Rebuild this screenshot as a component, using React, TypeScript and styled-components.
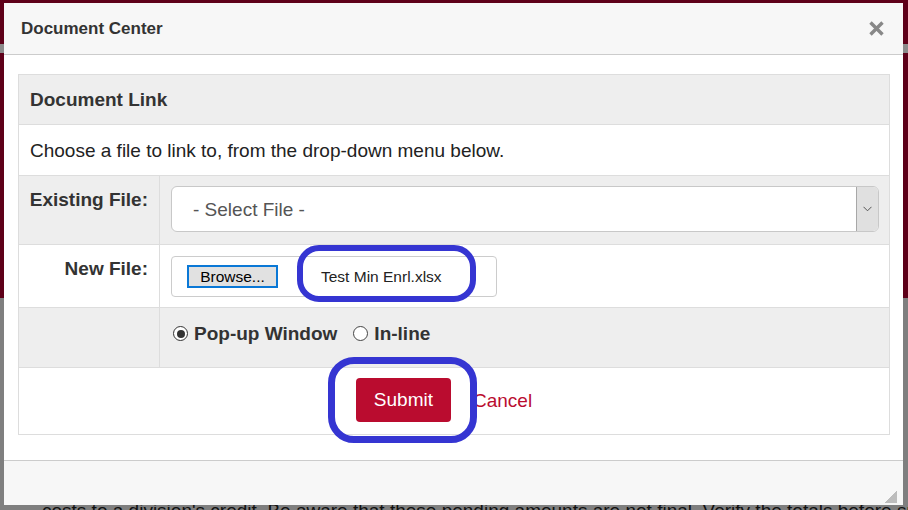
import React from "react";
import styled, { createGlobalStyle } from "styled-components";

const GlobalStyle = createGlobalStyle`
  html, body {
    margin: 0;
    padding: 0;
  }
  body {
    font-family: "Liberation Sans", Arial, sans-serif;
    background: #7f7f7f;
    overflow: hidden;
  }
`;

// page behind the dialog (darkened by the overlay)
const Backdrop = styled.div`
    position: relative;
    width: 908px;
    height: 510px;
    overflow: hidden;
    display: flex;
    flex-direction: column;
    background: #7f7f7f;
`;
const SiteHeader = styled.div`
    flex-shrink: 0;
    height: 44px;
    background: #5e0019;
`;
const SiteNav = styled.div`
    flex-shrink: 0;
    height: 9px;
    background: #8b8b8b;
`;
const SiteBanner = styled.div`
    flex-shrink: 0;
    height: 245px;
    background: #5e0019;
`;
const SiteContent = styled.div`
    flex-shrink: 0;
    padding: 199px 0 0 42px;
    font-size: 19px;
    line-height: 27px;
    color: #111;
    white-space: nowrap;
`;

const Modal = styled.div`
    position: absolute;
    left: 4px;
    top: 3px;
    width: 899px;
    height: 502px;
    background: #fff;
    display: flex;
    flex-direction: column;
`;
const ModalHeader = styled.div`
    height: 52px;
    box-sizing: border-box;
    background: #f7f7f7;
    border-bottom: 1px solid #ccc;
    display: flex;
    align-items: center;
    justify-content: space-between;
    padding: 0 19px 0 17px;
`;
const ModalTitle = styled.h4`
    margin: 0;
    font-size: 17px;
    font-weight: 700;
    color: #333;
`;
const CloseButton = styled.button`
    border: 0;
    background: none;
    padding: 0;
    width: 15px;
    height: 15px;
    display: flex;
    cursor: pointer;
`;
const ModalBody = styled.div`
    flex: 1;
    padding: 19px 13px 0 14px;
`;
const ModalFooter = styled.div`
    position: relative;
    height: 45px;
    box-sizing: border-box;
    border-top: 1px solid #ccc;
    background: #f7f7f7;
`;
const ResizeGrip = styled.div`
    position: absolute;
    right: 6px;
    bottom: 2px;
    width: 13px;
    height: 13px;
    background: linear-gradient(to bottom right, transparent 50%, #bdbdbd 50%);
`;

const FormTable = styled.div`
    border: 1px solid #ddd;
    font-size: 19px;
    line-height: 27px;
    color: #333;
`;
const Row = styled.div<{ $shade?: boolean }>`
    display: flex;
    background: ${(p) => (p.$shade ? "#eee" : "#fff")};
    & + & {
        border-top: 1px solid #ddd;
    }
`;
const HeadCell = styled.div`
    flex: 1;
    padding: 11px 11px;
    font-weight: 700;
`;
const TextCell = styled.div`
    flex: 1;
    padding: 12px 11px 11px;
    color: #222;
`;
const LabelCell = styled.div`
    width: 141px;
    flex-shrink: 0;
    box-sizing: border-box;
    border-right: 1px solid #ddd;
    text-align: right;
    font-weight: 700;
    padding: 10px 11px 0 0;
`;
const ValueCell = styled.div<{ $pad: string }>`
    flex: 1;
    padding: ${(p) => p.$pad};
`;
const ActionCell = styled.div`
    flex: 1;
    display: flex;
    justify-content: center;
    align-items: center;
    padding: 10px 0 12px;
`;

const SelectBox = styled.div`
    height: 46px;
    box-sizing: border-box;
    border: 1px solid #c8c8c8;
    border-radius: 6px;
    background: #fff;
    display: flex;
    align-items: center;
    justify-content: space-between;
    overflow: hidden;
`;
const SelectText = styled.span`
    padding-left: 21px;
    color: #555;
`;
const SelectArrow = styled.span`
    width: 21px;
    align-self: stretch;
    background: #e0e0e0;
    border-left: 1px solid #a8a8a8;
    display: flex;
    align-items: center;
    justify-content: center;
`;

const FileBox = styled.div`
    position: relative;
    width: 326px;
    height: 41px;
    box-sizing: border-box;
    border: 1px solid #ccc;
    border-radius: 4px;
    background: #fff;
    display: flex;
    align-items: center;
    padding-left: 15px;
    font-size: 15.5px;
`;
const BrowseButton = styled.button`
    height: 23px;
    width: 91px;
    box-sizing: border-box;
    border: 2px solid #0a78d6;
    background: #e1e1e1;
    font-family: inherit;
    font-size: 15.5px;
    line-height: 19px;
    color: #000;
    padding: 0;
`;
const FileName = styled.span`
    margin-left: 43px;
    color: #222;
`;

const RadioGroup = styled.div`
    display: flex;
    align-items: center;
    font-weight: 700;
    padding-left: 2px;
`;
const RadioOption = styled.label`
    display: flex;
    align-items: center;
    gap: 6px;
    & + & {
        margin-left: 16px;
    }
`;
const RadioDot = styled.span<{ $checked?: boolean }>`
    width: 15px;
    height: 15px;
    box-sizing: border-box;
    border-radius: 50%;
    border: ${(p) => (p.$checked ? "1.5px solid #333" : "1px solid #444")};
    background: #fff;
    display: inline-flex;
    align-items: center;
    justify-content: center;
    &::after {
        content: "";
        width: 8px;
        height: 8px;
        border-radius: 50%;
        background: #333;
        display: ${(p) => (p.$checked ? "block" : "none")};
    }
`;

const SubmitWrap = styled.span`
    position: relative;
    display: inline-flex;
`;
const SubmitButton = styled.button`
    height: 44px;
    padding: 0 18px;
    background: #ba0c2f;
    color: #fff;
    border: 0;
    border-radius: 4px;
    font-family: inherit;
    font-size: 19px;
`;
const CancelLink = styled.a`
    margin: 0 20px 0 22px;
    color: #ba0c2f;
    text-decoration: none;
`;

// blue annotation rings drawn over the screenshot
const Highlight = styled.span<{ $stroke: number; $radius: number }>`
    position: absolute;
    box-sizing: border-box;
    border: ${(p) => p.$stroke}px solid #3535d2;
    border-radius: ${(p) => p.$radius}px;
    pointer-events: none;
`;

const App = () => {
    return (
        <Backdrop>
            <GlobalStyle />
            <SiteHeader />
            <SiteNav />
            <SiteBanner />
            <SiteContent>
                costs to a division's credit. Be aware that these pending amounts are not final. Verify the totals before submitting
            </SiteContent>

            <Modal>
                <ModalHeader>
                    <ModalTitle>Document Center</ModalTitle>
                    <CloseButton aria-label="Close">
                        <svg width="15" height="15" viewBox="0 0 15 15">
                            <path d="M1.5 1.5 L13.5 13.5 M13.5 1.5 L1.5 13.5" stroke="#888" strokeWidth="3.4" />
                        </svg>
                    </CloseButton>
                </ModalHeader>

                <ModalBody>
                    <FormTable>
                        <Row $shade>
                            <HeadCell>Document Link</HeadCell>
                        </Row>
                        <Row>
                            <TextCell>Choose a file to link to, from the drop-down menu below.</TextCell>
                        </Row>
                        <Row $shade>
                            <LabelCell>Existing File:</LabelCell>
                            <ValueCell $pad="10px 10px 12px 11px">
                                <SelectBox>
                                    <SelectText>- Select File -</SelectText>
                                    <SelectArrow>
                                        <svg width="9" height="6" viewBox="0 0 9 6">
                                            <path d="M0.5 0.8 L4.5 4.8 L8.5 0.8" fill="none" stroke="#555" strokeWidth="1" />
                                        </svg>
                                    </SelectArrow>
                                </SelectBox>
                            </ValueCell>
                        </Row>
                        <Row>
                            <LabelCell>New File:</LabelCell>
                            <ValueCell $pad="11px 10px 10px 11px">
                                <FileBox>
                                    <BrowseButton>Browse...</BrowseButton>
                                    <FileName>Test Min Enrl.xlsx</FileName>
                                    <Highlight $stroke={6} $radius={22} style={{ left: 125, top: -12, width: 179, height: 57 }} />
                                </FileBox>
                            </ValueCell>
                        </Row>
                        <Row $shade>
                            <LabelCell />
                            <ValueCell $pad="12px 10px 20px 11px">
                                <RadioGroup>
                                    <RadioOption>
                                        <RadioDot $checked />
                                        Pop-up Window
                                    </RadioOption>
                                    <RadioOption>
                                        <RadioDot />
                                        In-line
                                    </RadioOption>
                                </RadioGroup>
                            </ValueCell>
                        </Row>
                        <Row>
                            <ActionCell>
                                <SubmitWrap>
                                    <SubmitButton>Submit</SubmitButton>
                                    <Highlight $stroke={7} $radius={26} style={{ left: -28, top: -21, width: 149, height: 86 }} />
                                </SubmitWrap>
                                <CancelLink href="#">Cancel</CancelLink>
                            </ActionCell>
                        </Row>
                    </FormTable>
                </ModalBody>

                <ModalFooter>
                    <ResizeGrip />
                </ModalFooter>
            </Modal>
        </Backdrop>
    );
};

export default App;
